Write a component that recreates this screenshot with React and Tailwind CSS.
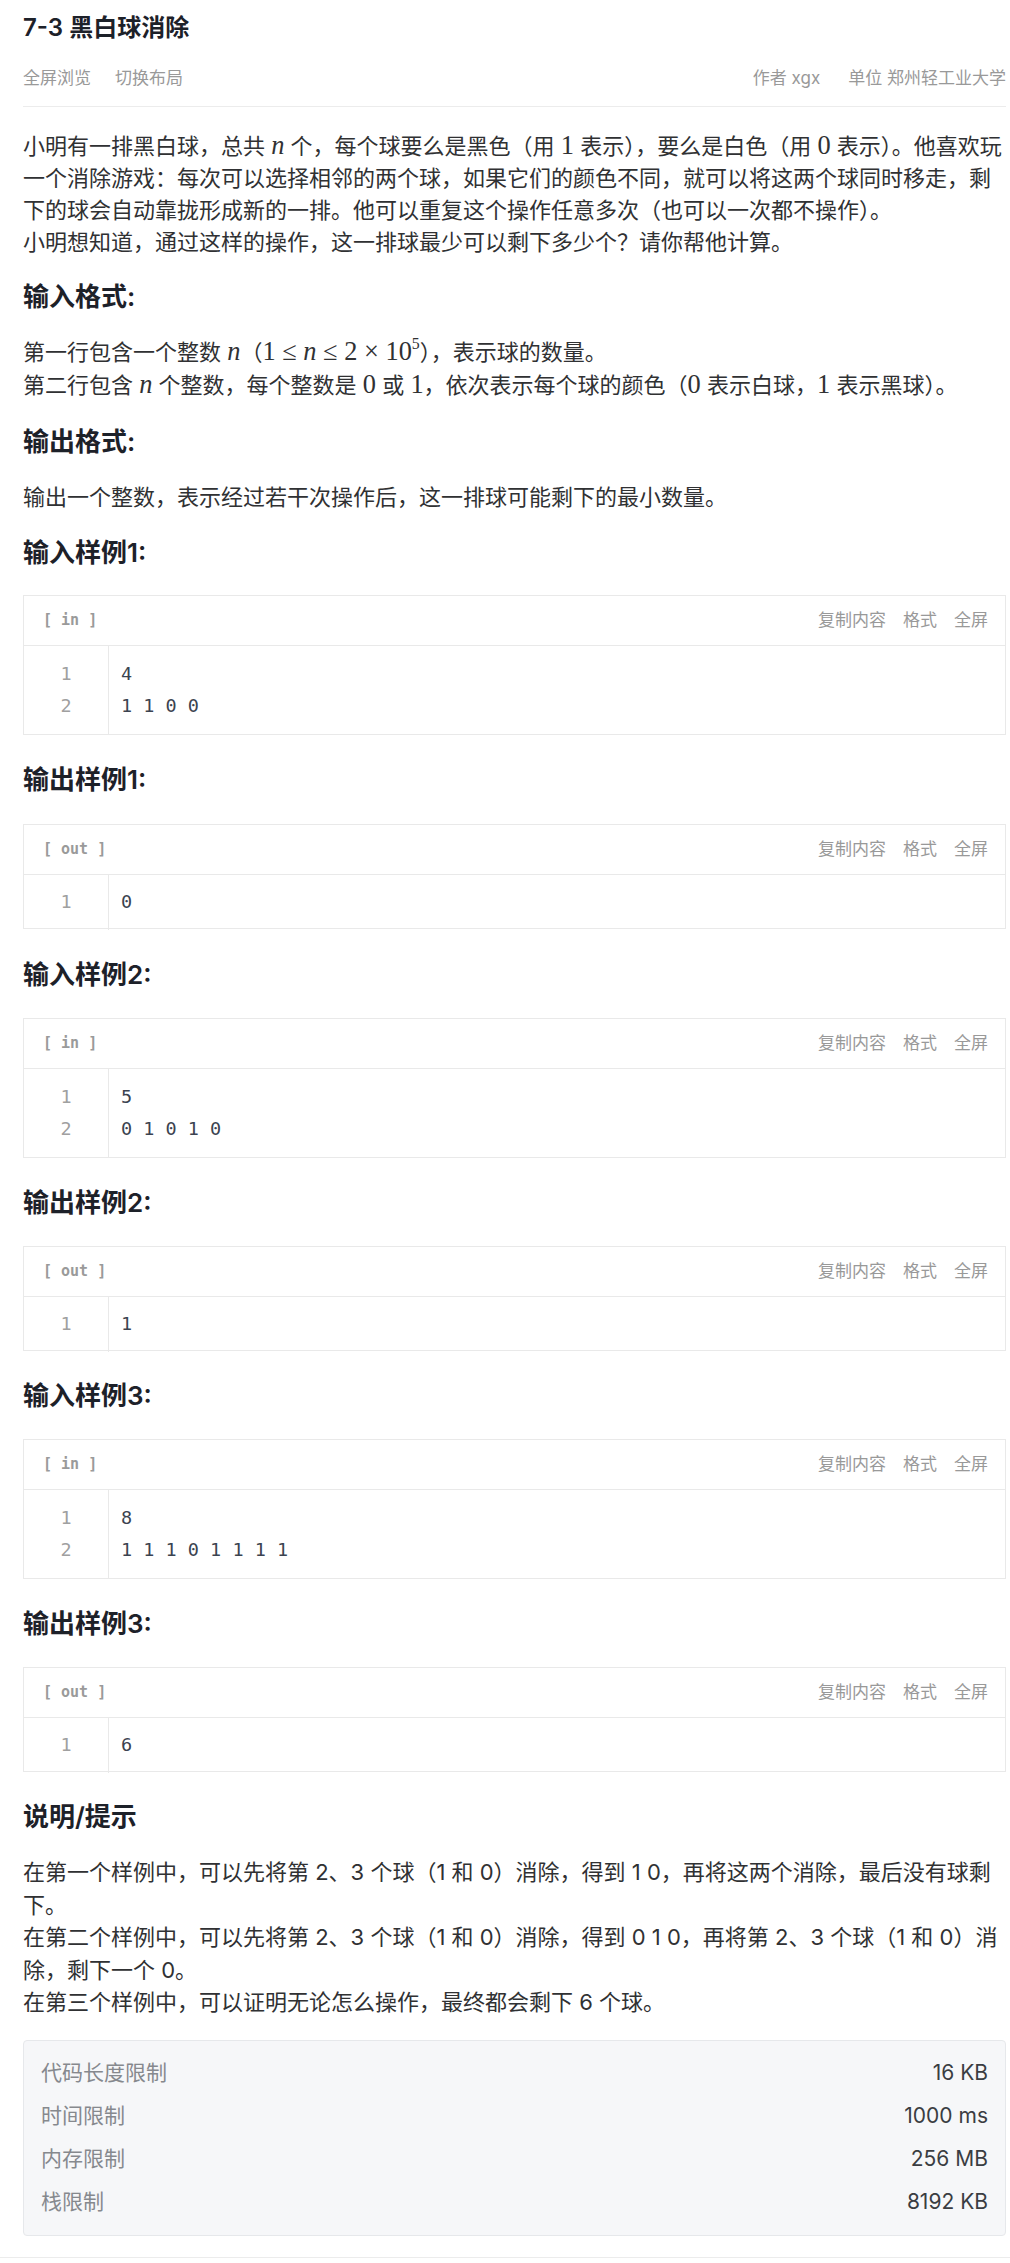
import React from 'react';

const M = ({ children, i }) => (
  <span className={`font-['Liberation_Serif',serif] text-[1.2em] leading-none ${i ? 'italic' : ''}`}>{children}</span>
);

const SampleBox = ({ tag, lines }) => (
  <div className="border border-[#e9e9e9] bg-white">
    <div className="h-[50px] flex items-center justify-between pl-[19px] pr-[17px] border-b border-[#e9e9e9]">
      <span className="font-['DejaVu_Sans_Mono',monospace] text-[15px] font-semibold text-[#9a9a9a] whitespace-pre">[ {tag} ]</span>
      <div className="flex gap-[17px] text-[17px] text-[#999]">
        <span>复制内容</span>
        <span>格式</span>
        <span>全屏</span>
      </div>
    </div>
    <div className={`flex font-['DejaVu_Sans_Mono',monospace] text-[18.5px] leading-[32px] ${lines.length > 1 ? 'py-[12px]' : 'pt-[11px] pb-[10px]'}`}>
      <div className="w-[85px] shrink-0 border-r border-[#e9e9e9] text-center text-[#a0a0a0] -my-[12px] py-[12px]">
        {lines.map((_, idx) => <div key={idx}>{idx + 1}</div>)}
      </div>
      <div className="pl-[12px] text-[#3b4350]">
        {lines.map((l, idx) => <div key={idx} className="whitespace-pre">{l}</div>)}
      </div>
    </div>
  </div>
);

const H = ({ children, className = '' }) => (
  <h3 className={`text-[26px] leading-[36px] font-semibold text-[#1d2129] ${className}`}>{children}</h3>
);

export default function App() {
  return (
    <div className="bg-white min-h-[2263px] font-['Inter','Noto_Sans_CJK_SC',sans-serif]">
      <div className="pl-[23px] pr-[4px] flex flex-col">
        <h1 className="pt-[12px] text-[24px] leading-[32px] font-semibold text-[#1d2129]">7-3 黑白球消除</h1>
        <div className="mt-[22px] pb-[16px] border-b border-[#ececec] flex justify-between text-[17px] leading-[24px] text-[#999]">
          <div className="flex gap-[24px]">
            <span>全屏浏览</span>
            <span>切换布局</span>
          </div>
          <div className="flex gap-[28px]">
            <span>作者 xgx</span>
            <span>单位 郑州轻工业大学</span>
          </div>
        </div>

        <div className="mt-[23px] text-[22px] leading-[32px] text-[#303133]">
          <p>
            小明有一排黑白球，总共 <M i>n</M> 个，每个球要么是黑色（用 <M>1</M> 表示），要么是白色（用 <M>0</M> 表示）。他喜欢玩一个消除游戏：每次可以选择相邻的两个球，如果它们的颜色不同，就可以将这两个球同时移走，剩下的球会自动靠拢形成新的一排。他可以重复这个操作任意多次（也可以一次都不操作）。
          </p>
          <p>小明想知道，通过这样的操作，这一排球最少可以剩下多少个？请你帮他计算。</p>
        </div>

        <H className="mt-[21px]">输入格式:</H>
        <div className="mt-[21px] text-[22px] leading-[33px] text-[#303133]">
          <p>
            第一行包含一个整数 <M i>n</M>（<M>1 ≤ </M><M i>n</M><M> ≤ 2 × 10<sup className="text-[0.6em] -top-[0.7em]">5</sup></M>），表示球的数量。
          </p>
          <p>
            第二行包含 <M i>n</M> 个整数，每个整数是 <M>0</M> 或 <M>1</M>，依次表示每个球的颜色（<M>0</M> 表示白球，<M>1</M> 表示黑球）。
          </p>
        </div>

        <H className="mt-[22px]">输出格式:</H>
        <p className="mt-[21px] text-[22px] leading-[32px] text-[#303133]">输出一个整数，表示经过若干次操作后，这一排球可能剩下的最小数量。</p>

        <H className="mt-[22px] mb-[24px]">输入样例1:</H>
        <SampleBox tag="in" lines={['4', '1 1 0 0']} />
        <H className="mt-[27px] mb-[26px]">输出样例1:</H>
        <SampleBox tag="out" lines={['0']} />

        <H className="mt-[28px] mb-[25px]">输入样例2:</H>
        <SampleBox tag="in" lines={['5', '0 1 0 1 0']} />
        <H className="mt-[27px] mb-[25px]">输出样例2:</H>
        <SampleBox tag="out" lines={['1']} />

        <H className="mt-[27px] mb-[25px]">输入样例3:</H>
        <SampleBox tag="in" lines={['8', '1 1 1 0 1 1 1 1']} />
        <H className="mt-[27px] mb-[25px]">输出样例3:</H>
        <SampleBox tag="out" lines={['6']} />

        <H className="mt-[27px]">说明/提示</H>
        <div className="mt-[21px] text-[22px] leading-[32.5px] text-[#303133]">
          <p>在第一个样例中，可以先将第 2、3 个球（1 和 0）消除，得到 1 0，再将这两个消除，最后没有球剩下。</p>
          <p>在第二个样例中，可以先将第 2、3 个球（1 和 0）消除，得到 0 1 0，再将第 2、3 个球（1 和 0）消除，剩下一个 0。</p>
          <p>在第三个样例中，可以证明无论怎么操作，最终都会剩下 6 个球。</p>
        </div>

        <div className="mt-[21px] bg-[#f6f7f9] border border-[#e6e8eb] rounded-[4px] pt-[16px] pb-[17px] pl-[17px] pr-[17px] flex flex-col gap-[11px] text-[21px] leading-[32px]">
          {[
            ['代码长度限制', '16 KB'],
            ['时间限制', '1000 ms'],
            ['内存限制', '256 MB'],
            ['栈限制', '8192 KB'],
          ].map(([k, v]) => (
            <div key={k} className="flex justify-between">
              <span className="text-[#86898e]">{k}</span>
              <span className="text-[#3a3d42]">{v}</span>
            </div>
          ))}
        </div>
      </div>
      <div className="mt-[21px] border-t border-[#ececec]" />
    </div>
  );
}
